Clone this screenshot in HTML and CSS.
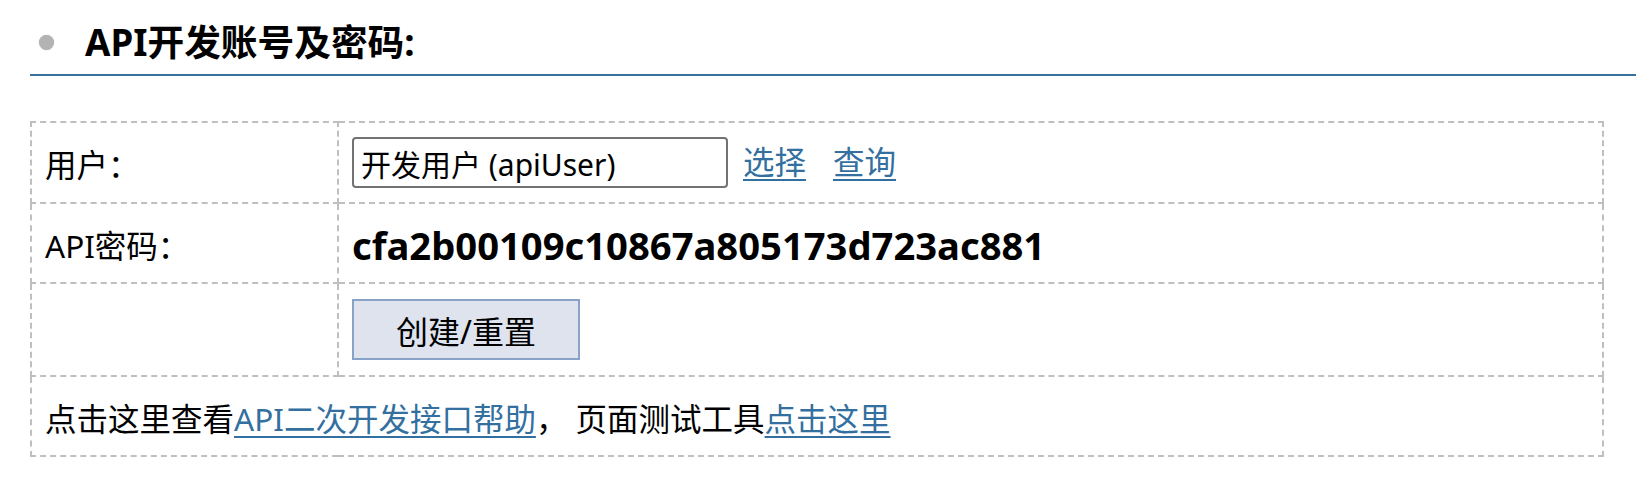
FILE: index.html
```html
<!DOCTYPE html>
<html lang="zh">
<head>
    <meta charset="UTF-8">
    <meta name="viewport" content="width=device-width, initial-scale=1.0">
    <title>API开发账号及密码</title>
    <link rel="stylesheet" href="styles.css">
</head>
<body>

    <div class="page">
        <div class="section-title">
            <span class="dot"></span>
            <h3>API开发账号及密码:</h3>
        </div>

        <!-- 账号信息表 -->
        <table class="form-table">
            <tr>
                <td class="label">用户：</td>
                <td>
                    <div class="user-line">
                        <input type="text" class="user-input" value="开发用户 (apiUser)" readonly>
                        <a href="#" class="link-select">选择</a>
                        <a href="#" class="link-query">查询</a>
                    </div>
                </td>
            </tr>
            <tr>
                <td class="label">API密码：</td>
                <td class="text-cell"><span class="secret">cfa2b00109c10867a805173d723ac881</span></td>
            </tr>
            <tr>
                <td class="label"></td>
                <td><button type="button" class="btn-reset">创建/重置</button></td>
            </tr>
            <tr>
                <td colspan="2" class="text-cell">点击这里查看<a href="#">API二次开发接口帮助</a>， 页面测试工具<a href="#">点击这里</a></td>
            </tr>
        </table>
    </div>

</body>
</html>
```

FILE: styles.css
```css
/* 基础样式 */
* {
    box-sizing: border-box;
}

body {
    margin: 0;
    font-family: 'Noto Sans', 'Noto Sans CJK SC', sans-serif;
    background: #fff;
    color: #000;
}

.page {
    padding-left: 30px;
}

/* 标题 */
.section-title {
    display: flex;
    align-items: center;
    gap: 31px;
    padding: 13px 0 3px 9px;
    border-bottom: 2px solid #3671a0;
}

.dot {
    width: 15px;
    height: 15px;
    border-radius: 50%;
    background: #b3b3b3;
    box-shadow: 0 0 1px #b3b3b3;
}

.section-title h3 {
    margin: 0;
    font-size: 36.7px;
    font-weight: bold;
    line-height: 58px;
}

/* 表格 */
.form-table {
    width: calc(100% - 32px);
    margin-top: 45px;
    border-collapse: collapse;
    border: 2px dashed #bfbfbf;
    font-size: 31.5px;
}

.form-table td {
    border: 2px dashed #bfbfbf;
    padding: 14px 13px;
    height: 80px;
    vertical-align: middle;
    line-height: 1.3;
}

/* 纯文字单元格略微下移 */
.form-table td.label,
.form-table td.text-cell {
    padding-top: 17px;
    padding-bottom: 11px;
}

.form-table td.label {
    width: 307px;
}

.form-table a {
    color: #336f9f;
    text-decoration: underline;
    text-decoration-thickness: 2px;
    text-underline-offset: 5px;
}

.user-line {
    display: flex;
    align-items: center;
}

.user-input {
    width: 376px;
    height: 51px;
    padding: 0 7px;
    border: 2px solid #727272;
    border-radius: 4px;
    font-family: inherit;
    font-size: 30px;
    color: #000;
}

.user-line .link-select {
    margin-left: 15px;
}

.user-line .link-query {
    margin-left: 27px;
}

.secret {
    font-size: 38.2px;
    font-weight: bold;
    line-height: 1.2;
}

.btn-reset {
    display: block;
    width: 228px;
    height: 61px;
    margin: 1px 0;
    background: #dee3ee;
    border: 2px solid #89a3c8;
    font-family: inherit;
    font-size: 32px;
    color: #000;
    cursor: pointer;
}
```
